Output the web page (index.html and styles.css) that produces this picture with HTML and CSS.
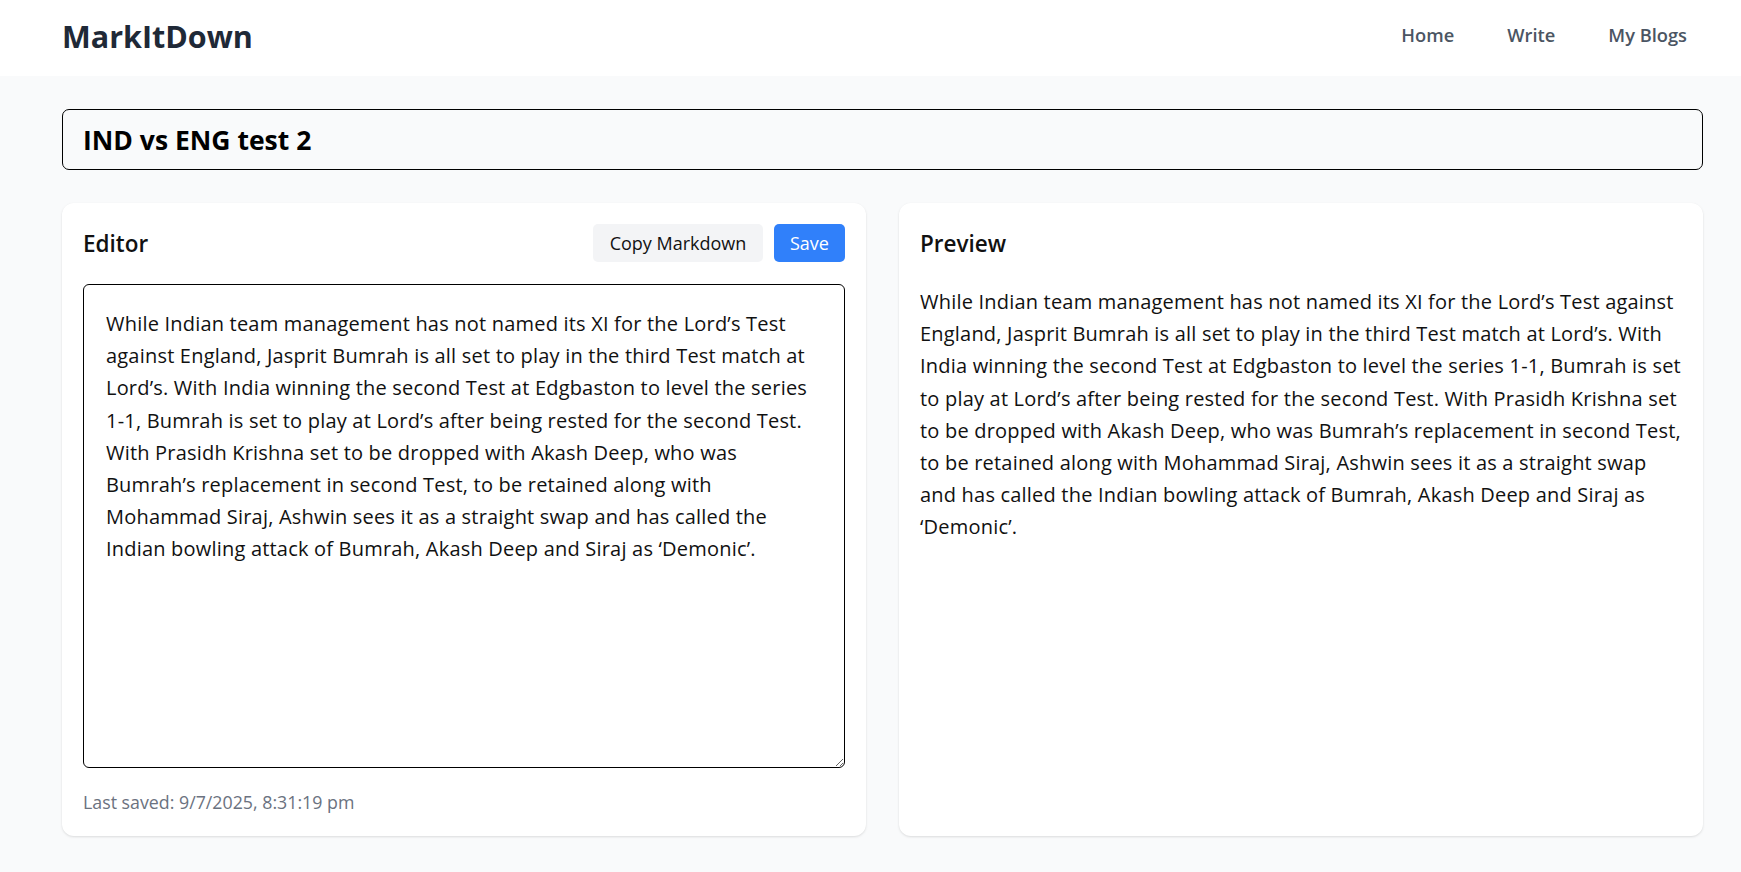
FILE: index.html
```html
<!DOCTYPE html>
<html lang="en">
<head>
<meta charset="utf-8">
<title>MarkItDown</title>
<link rel="stylesheet" href="styles.css">
</head>
<body>
<header class="topbar">
  <div class="logo">MarkItDown</div>
  <nav class="nav">
    <a href="#" class="nav-link">Home</a>
    <a href="#" class="nav-link">Write</a>
    <a href="#" class="nav-link">My Blogs</a>
  </nav>
</header>
<main class="main">
  <input class="title-input" type="text" value="IND vs ENG test 2">
  <div class="panes">
    <section class="card">
      <div class="card-head">
        <h2 class="card-title">Editor</h2>
        <div class="actions">
          <button class="btn btn-light">Copy Markdown</button>
          <button class="btn btn-primary">Save</button>
        </div>
      </div>
      <textarea class="editor" spellcheck="true">While Indian team management has not named its XI for the Lord’s Test against England, Jasprit Bumrah is all set to play in the third Test match at Lord’s. With India winning the second Test at Edgbaston to level the series 1-1, Bumrah is set to play at Lord’s after being rested for the second Test. With Prasidh Krishna set to be dropped with Akash Deep, who was Bumrah’s replacement in second Test, to be retained along with Mohammad Siraj, Ashwin sees it as a straight swap and has called the Indian bowling attack of Bumrah, Akash Deep and Siraj as ‘Demonic’.</textarea>
      <p class="saved">Last saved: 9/7/2025, 8:31:19 pm</p>
    </section>
    <section class="card">
      <div class="card-head">
        <h2 class="card-title">Preview</h2>
      </div>
      <div class="preview">
        <p>While Indian team management has not named its XI for the Lord’s Test against England, Jasprit Bumrah is all set to play in the third Test match at Lord’s. With India winning the second Test at Edgbaston to level the series 1-1, Bumrah is set to play at Lord’s after being rested for the second Test. With Prasidh Krishna set to be dropped with Akash Deep, who was Bumrah’s replacement in second Test, to be retained along with Mohammad Siraj, Ashwin sees it as a straight swap and has called the Indian bowling attack of Bumrah, Akash Deep and Siraj as ‘Demonic’.</p>
      </div>
    </section>
  </div>
</main>
</body>
</html>
```
FILE: styles.css
```css
* { box-sizing: border-box; }
html, body { margin: 0; padding: 0; }
body {
  font-family: "Open Sans", "Noto Sans", sans-serif;
  color: #111;
  background: #f9fafb;
  min-height: 872px;
}
.topbar {
  height: 76px;
  background: #fff;
  display: flex;
  align-items: center;
  justify-content: space-between;
  padding: 0 38px 5px 62px;
}
.logo {
  font-size: 30.5px;
  font-weight: 700;
  color: #1f2937;
}
.nav {
  display: flex;
  gap: 21px;
  margin-bottom: 3px;
}
.nav-link {
  font-size: 18.3px;
  font-weight: 600;
  color: #4b5563;
  text-decoration: none;
  padding: 6px 16px;
}
.main {
  padding: 33px 38px 36px 62px;
}
.title-input {
  display: block;
  width: 100%;
  height: 61px;
  border: 1px solid #000;
  border-radius: 7px;
  background: transparent;
  padding: 0 20px;
  font-family: "Open Sans", sans-serif;
  font-size: 26.5px;
  font-weight: 700;
  letter-spacing: 0;
  color: #000;
  outline: none;
}
.panes {
  margin-top: 33px;
  display: grid;
  grid-template-columns: 1fr 1fr;
  gap: 33px;
}
.card {
  background: #fff;
  border-radius: 12px;
  box-shadow: 0 1px 3px rgba(0,0,0,0.08), 0 1px 2px rgba(0,0,0,0.05);
  padding: 21px 21px 20px;
  display: flex;
  flex-direction: column;
}
.card-head {
  height: 38px;
  display: flex;
  align-items: center;
  justify-content: space-between;
}
.card-title {
  margin: 0;
  font-size: 22.5px;
  font-weight: 600;
  color: #111;
}
.actions {
  display: flex;
  gap: 11px;
}
.btn {
  height: 38px;
  border: none;
  border-radius: 5px;
  font-family: "Open Sans", sans-serif;
  font-size: 18px;
  padding: 0 16px;
  cursor: pointer;
}
.btn-light {
  width: 170px;
  background: #f3f4f6;
  color: #111;
}
.btn-primary {
  width: 71px;
  background: #3080fa;
  color: #fff;
}
.editor {
  display: block;
  margin-top: 22px;
  width: 100%;
  height: 484px;
  border: 1px solid #000;
  border-radius: 6px;
  padding: 23px 22px 21px;
  font-family: "Open Sans", sans-serif;
  font-size: 20px;
  letter-spacing: 0.2px;
  line-height: 32.2px;
  color: #111;
  resize: vertical;
  outline: none;
}
.saved {
  margin: 20px 0 0;
  font-size: 17.8px;
  line-height: 28px;
  color: #6b7280;
}
.preview {
  margin-top: 24px;
}
.preview p {
  margin: 0;
  font-size: 20px;
  letter-spacing: 0.2px;
  line-height: 32.2px;
  color: #111;
}
```
